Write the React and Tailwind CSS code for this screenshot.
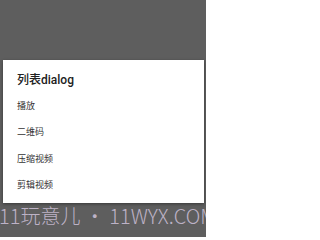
export default function App() {
  const items = ["播放", "二维码", "压缩视频", "剪辑视频"];

  return (
    <div
      className="w-[206px] h-[237px] bg-[#5e5e5e] overflow-hidden flex flex-col pt-[60px]"
      style={{ fontFamily: 'Roboto, "Noto Sans CJK SC", sans-serif' }}
    >
      <div className="ml-[3px] w-[201px] h-[143px] bg-white shadow-[0_1px_3px_rgba(0,0,0,0.4)] flex flex-col pt-[12px]">
        <div className="px-[14px] text-[12px] leading-[16px] font-medium text-[#212121]">列表dialog</div>
        <div className="mt-[5px] flex flex-col">
          {items.map((item) => (
            <div key={item} className="h-[26.5px] flex items-center px-[14px] text-[9px] text-[#333333]">
              {item}
            </div>
          ))}
        </div>
      </div>
      <div
        className="whitespace-nowrap text-[20px] leading-[24px] font-light text-[#bdb2c6] mt-[1px] -ml-[1px]"
        style={{ fontFamily: '"Noto Sans CJK SC", sans-serif' }}
      >
        11玩意儿 • 11WYX.COM
      </div>
    </div>
  );
}
